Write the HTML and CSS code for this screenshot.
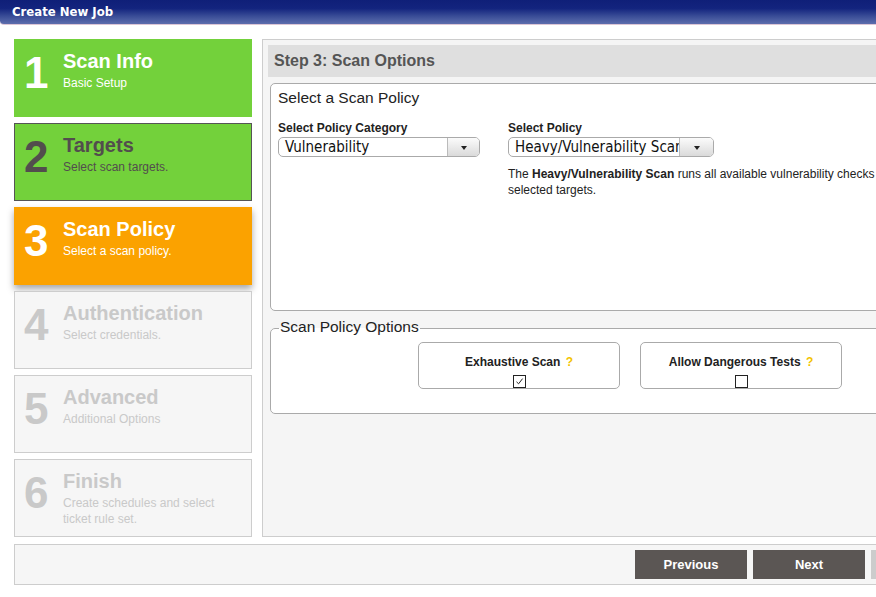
FILE: index.html
```html
<!DOCTYPE html>
<html lang="en">
<head>
<meta charset="utf-8">
<title>Create New Job</title>
<link rel="stylesheet" href="styles.css">
</head>
<body>
<div class="titlebar">Create New Job</div>
<div class="page">
  <div class="main">
    <div class="steps">
      <div class="step done">
        <div class="step-num">1</div>
        <div class="step-text"><div class="step-title">Scan Info</div><div class="step-sub">Basic Setup</div></div>
      </div>
      <div class="step done visited">
        <div class="step-num">2</div>
        <div class="step-text"><div class="step-title">Targets</div><div class="step-sub">Select scan targets.</div></div>
      </div>
      <div class="step current">
        <div class="step-num">3</div>
        <div class="step-text"><div class="step-title">Scan Policy</div><div class="step-sub">Select a scan policy.</div></div>
      </div>
      <div class="step todo">
        <div class="step-num">4</div>
        <div class="step-text"><div class="step-title">Authentication</div><div class="step-sub">Select credentials.</div></div>
      </div>
      <div class="step todo">
        <div class="step-num">5</div>
        <div class="step-text"><div class="step-title">Advanced</div><div class="step-sub">Additional Options</div></div>
      </div>
      <div class="step todo">
        <div class="step-num">6</div>
        <div class="step-text"><div class="step-title">Finish</div><div class="step-sub">Create schedules and select ticket rule set.</div></div>
      </div>
    </div>
    <div class="panel">
      <div class="panel-head">Step 3: Scan Options</div>
      <div class="policy-box">
        <div class="policy-title">Select a Scan Policy</div>
        <div class="policy-row">
          <div class="col col-cat">
            <div class="field-label">Select Policy Category</div>
            <div class="select">
              <div class="select-value">Vulnerability</div>
              <div class="select-btn"><span class="arrow"></span></div>
            </div>
          </div>
          <div class="col col-pol">
            <div class="field-label">Select Policy</div>
            <div class="select select-wide">
              <div class="select-value">Heavy/Vulnerability Scan</div>
              <div class="select-btn"><span class="arrow"></span></div>
            </div>
            <p class="desc">The <b>Heavy/Vulnerability Scan</b> runs all available vulnerability checks against all selected targets.</p>
          </div>
        </div>
      </div>
      <fieldset class="options">
        <legend>Scan Policy Options</legend>
        <div class="opt-row">
          <div class="opt">
            <div class="opt-label">Exhaustive Scan <span class="help">?</span></div>
            <span class="check"><svg width="11" height="11" viewBox="0 0 11 11"><path d="M2.5 5.8 L4.6 7.8 L8.6 2.6" fill="none" stroke="#222" stroke-width="1"/></svg></span>
          </div>
          <div class="opt">
            <div class="opt-label">Allow Dangerous Tests <span class="help">?</span></div>
            <span class="check"></span>
          </div>
        </div>
      </fieldset>
    </div>
  </div>
  <div class="footer">
    <div class="btn">Previous</div>
    <div class="btn">Next</div>
    <div class="btn btn-off">Finish</div>
  </div>
</div>
</body>
</html>
```
FILE: styles.css
```css
html, body {
  margin: 0;
  padding: 0;
  overflow: hidden;
  background: #fff;
  font-family: "Liberation Sans", Arial, sans-serif;
}

.titlebar {
  height: 24px;
  line-height: 24px;
  padding-left: 12px;
  color: #fff;
  font-family: "DejaVu Sans Condensed", "DejaVu Sans", sans-serif;
  font-weight: bold;
  font-size: 13px;
  background: linear-gradient(to bottom, #0f1f78 0%, #13247e 35%, #3a4d97 68%, #5d6ead 100%);
  border-bottom: 1px solid #dcc6d6;
  border-bottom-left-radius: 4px;
  white-space: nowrap;
}

.page {
  width: 984px;
  margin: 14px 0 0 14px;
}

.main {
  display: flex;
  gap: 10px;
}

.steps {
  width: 238px;
  flex: none;
  display: flex;
  flex-direction: column;
  gap: 6px;
}

.step {
  height: 78px;
  box-sizing: border-box;
  border: 1px solid transparent;
  padding: 9px 10px 0 9px;
  display: flex;
}

.step-num {
  width: 39px;
  flex: none;
  font-weight: bold;
  font-size: 44px;
  line-height: 44px;
  margin-top: 2px;
}

.step-title {
  font-weight: bold;
  font-size: 20px;
  line-height: 24px;
  white-space: nowrap;
}

.step-sub {
  font-size: 12px;
  line-height: 16px;
  margin-top: 2px;
}

.done {
  background: #73d13b;
  border-color: #73d13b;
  color: #fff;
}

.visited {
  border-color: #555;
  color: #524d4d;
}

.current {
  background: #fba200;
  border-color: #fba200;
  color: #fff;
  box-shadow: 0 4px 7px rgba(0, 0, 0, 0.35);
}

.todo {
  background: #f6f6f6;
  border-color: #cdcdcd;
  color: #c9c9c9;
}

.panel {
  flex: 1;
  border: 1px solid #cdcdcd;
  background: #f5f5f5;
  padding: 5px;
}

.panel-head {
  height: 32px;
  line-height: 32px;
  background: #dfdfdf;
  color: #555;
  font-weight: bold;
  font-size: 16px;
  padding-left: 6px;
}

.policy-box {
  margin: 6px 2px 0;
  width: 720px;
  height: 228px;
  box-sizing: border-box;
  border: 1px solid #aaa;
  border-radius: 5px;
  background: #fff;
  padding: 5px 7px;
}

.policy-title {
  font-size: 15.5px;
  line-height: 18px;
  color: #222;
}

.policy-row {
  display: flex;
  gap: 28px;
  margin-top: 14px;
}

.col-cat {
  width: 202px;
}

.field-label {
  font-weight: bold;
  font-size: 12px;
  line-height: 14px;
  color: #222;
  margin-bottom: 2px;
}

.select {
  width: 202px;
  height: 20px;
  box-sizing: border-box;
  border: 1px solid #aaa;
  border-radius: 5px;
  display: flex;
  overflow: hidden;
  background: #fff;
}

.select-wide {
  width: 206px;
}

.select-value {
  flex: 1;
  min-width: 0;
  padding-left: 6px;
  font-family: "DejaVu Sans Condensed", "DejaVu Sans", sans-serif;
  font-stretch: condensed;
  font-size: 15px;
  line-height: 18px;
  color: #111;
  white-space: nowrap;
  overflow: hidden;
}

.select-btn {
  width: 31px;
  flex: none;
  border-left: 1px solid #bbb;
  background: linear-gradient(to bottom, #fbfbfb, #dadada);
  display: flex;
  align-items: center;
  justify-content: center;
}

.select-wide .select-btn {
  width: 33px;
}

.arrow {
  width: 0;
  height: 0;
  border-left: 3.5px solid transparent;
  border-right: 3.5px solid transparent;
  border-top: 4px solid #222;
  margin-top: 1px;
}

.desc {
  margin: 9px 0 0;
  width: 450px;
  font-size: 12px;
  line-height: 16px;
  color: #222;
}

.options {
  margin: 7px 2px 0;
  width: 720px;
  box-sizing: border-box;
  min-width: 0;
  border: 1px solid #aaa;
  border-radius: 5px;
  background: #fff;
  padding: 4px 0 24px;
}

.options legend {
  margin-left: 8px;
  padding: 0 1px 3px;
  font-size: 15.5px;
  line-height: 17px;
  color: #222;
}

.opt-row {
  display: flex;
  justify-content: center;
  gap: 20px;
}

.opt {
  width: 202px;
  height: 47px;
  box-sizing: border-box;
  border: 1px solid #aaa;
  border-radius: 5px;
  background: #fff;
  padding-top: 12px;
  text-align: center;
}

.opt-label {
  font-weight: bold;
  font-size: 12px;
  line-height: 14px;
  color: #222;
}

.help {
  color: #f3c300;
  margin-left: 2px;
}

.check {
  display: block;
  width: 11px;
  height: 11px;
  border: 1px solid #222;
  margin: 6px auto 0;
  background: #fff;
}

.check svg {
  display: block;
}

.footer {
  margin-top: 7px;
  height: 41px;
  box-sizing: border-box;
  border: 1px solid #cdcdcd;
  background: #f6f6f6;
  display: flex;
  justify-content: flex-end;
  align-items: center;
  gap: 6px;
  padding-right: 14px;
}

.btn {
  width: 112px;
  height: 29px;
  line-height: 29px;
  text-align: center;
  background: #5b5654;
  color: #fff;
  font-weight: bold;
  font-size: 13px;
}

.btn-off {
  background: #cccccc;
}
```
